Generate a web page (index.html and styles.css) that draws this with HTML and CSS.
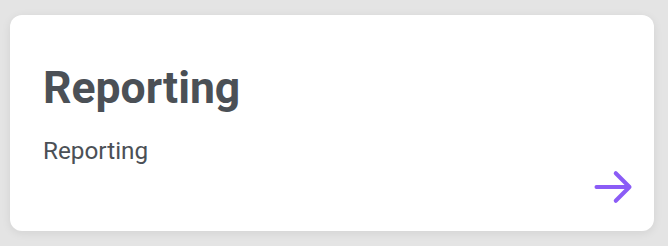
FILE: index.html
```html
<!DOCTYPE html>
<html lang="en">
<head>
<meta charset="utf-8">
<title>Reporting</title>
<link rel="stylesheet" href="styles.css">
</head>
<body>
<a class="card" href="#">
  <h2 class="card-title">Reporting</h2>
  <p class="card-text">Reporting</p>
  <div class="card-footer">
    <svg class="arrow" viewBox="0 0 24 24" fill="none" stroke="currentColor" stroke-width="2.2" stroke-linecap="round" stroke-linejoin="round" aria-hidden="true">
      <path d="M13.5 4.5 21 12m0 0-7.5 7.5M21 12H3"/>
    </svg>
  </div>
</a>
</body>
</html>
```
FILE: styles.css
```css
html, body {
  margin: 0;
  padding: 0;
}
body {
  background: #e4e4e4;
  font-family: Roboto, "Liberation Sans", sans-serif;
  padding: 15px 14px 15px 10px;
  box-sizing: border-box;
  width: 668px;
  height: 246px;
}
.card {
  display: flex;
  flex-direction: column;
  box-sizing: border-box;
  width: 644px;
  height: 216px;
  background: #ffffff;
  border-radius: 12px;
  box-shadow: 0 2px 10px rgba(0, 0, 0, 0.08);
  padding: 51px 19px 22px 33px;
  text-decoration: none;
  color: #4b5056;
}
.card-title {
  margin: 0;
  font-size: 44.5px;
  line-height: 1;
  font-weight: 700;
  color: #4b5056;
}
.card-text {
  margin: 28px 0 0;
  font-size: 24.3px;
  line-height: 1;
  color: #4b5056;
}
.card-footer {
  margin-top: auto;
  display: flex;
  justify-content: flex-end;
}
.arrow {
  width: 44px;
  height: 44px;
  color: #8b5cf6;
  display: block;
}
```
